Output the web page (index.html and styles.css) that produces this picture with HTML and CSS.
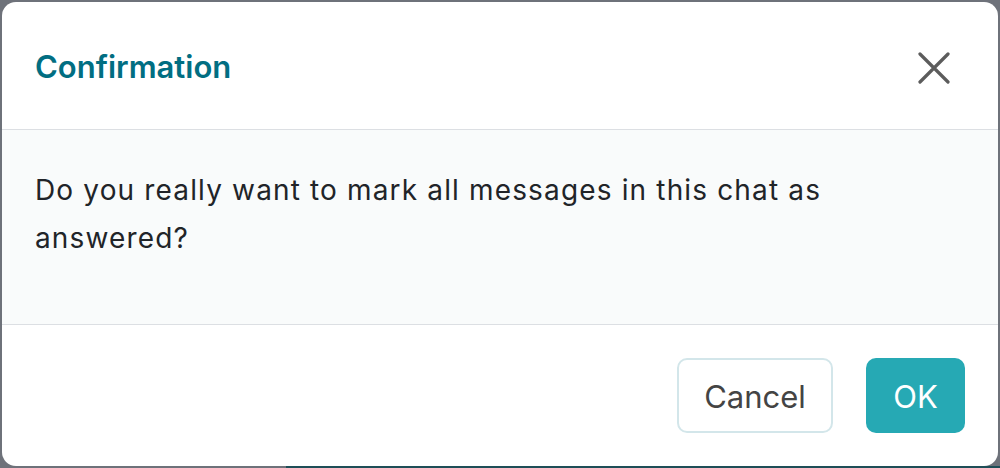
FILE: index.html
```html
<!DOCTYPE html>
<html lang="en">
<head>
<meta charset="utf-8">
<title>Confirmation</title>
<link rel="stylesheet" href="styles.css">
</head>
<body>
<div class="backdrop">
  <div class="modal">
    <div class="modal-header">
      <h1 class="modal-title">Confirmation</h1>
      <button class="close" aria-label="Close">
        <svg width="32" height="32" viewBox="0 0 32 32"><path d="M2 2 L30 30 M30 2 L2 30" stroke="#5c5c5c" stroke-width="3.2" stroke-linecap="round" fill="none"/></svg>
      </button>
    </div>
    <div class="modal-body">
      <p>Do you really want to mark all messages in this chat as answered?</p>
    </div>
    <div class="modal-footer">
      <button class="btn btn-cancel">Cancel</button>
      <button class="btn btn-ok">OK</button>
    </div>
  </div>
  <div class="under">
    <div class="under-gray"></div>
    <div class="under-teal"></div>
  </div>
</div>
</body>
</html>
```

FILE: styles.css
```css
* { box-sizing: border-box; }
html, body { margin: 0; padding: 0; }
body {
  width: 1000px;
  height: 468px;
  overflow: hidden;
  background: #6e727a;
  font-family: Inter, "Noto Sans", "Liberation Sans", sans-serif;
}
.backdrop {
  position: relative;
  width: 1000px;
  height: 468px;
  padding: 2px 2px 2px 2px;
}
.under {
  position: absolute;
  left: 0;
  right: 0;
  bottom: 0;
  height: 2px;
  display: flex;
}
.under-gray { width: 286px; background: #6e727a; }
.under-teal { flex: 1; background: #1e4e57; }
.modal {
  position: relative;
  z-index: 1;
  height: 464px;
  background: #fff;
  border-radius: 14px;
  overflow: hidden;
  display: flex;
  flex-direction: column;
}
.modal-header {
  height: 129px;
  display: flex;
  align-items: center;
  justify-content: space-between;
  padding: 0 48px 0 33px;
  border-bottom: 1px solid #dcdfe3;
}
.modal-title {
  margin: 0;
  font-size: 31px;
  font-weight: 600;
  color: #016e82;
  letter-spacing: 0;
  margin-top: 2px;
}
.close {
  border: 0;
  background: none;
  padding: 0;
  width: 32px;
  height: 32px;
  display: flex;
  margin-top: 4px;
}
.modal-body {
  background: #f9fbfb;
  padding: 36px 33px 34px;
  border-bottom: 1px solid #dcdfe3;
}
.modal-body p {
  margin: 0 0 28px;
  font-size: 28px;
  line-height: 48px;
  letter-spacing: 1.15px;
  color: #212428;
  max-width: 850px;
}
.modal-footer {
  flex: 1;
  display: flex;
  justify-content: flex-end;
  align-items: flex-start;
  gap: 33px;
  padding: 33px 33px;
}
.btn {
  height: 75px;
  border-radius: 10px;
  font-family: inherit;
  font-size: 31px;
  letter-spacing: 0;
  padding: 0;
  cursor: pointer;
}
.btn-cancel {
  width: 156px;
  background: #fff;
  border: 2px solid #d3e6ea;
  color: #444;
  padding-top: 2px;
}
.btn-ok {
  width: 99px;
  background: #26a9b4;
  border: 0;
  color: #fff;
  padding-top: 2px;
}
```
